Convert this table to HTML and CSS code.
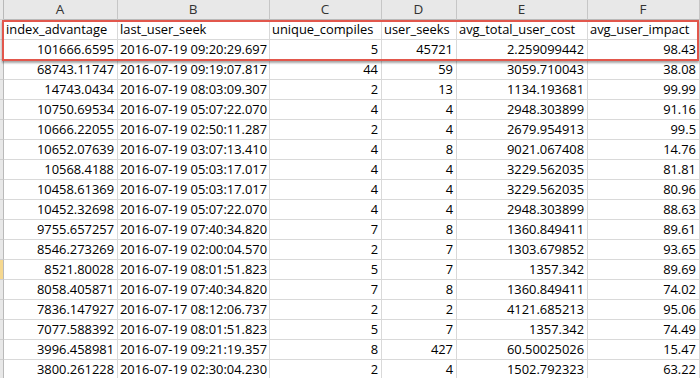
FILE: index.html
```html
<!DOCTYPE html>
<html>
<head>
<meta charset="utf-8">
<link rel="stylesheet" href="styles.css">
</head>
<body>
<div class="sheet">
  <table class="grid">
    <colgroup>
      <col class="c-stub"><col class="c-a"><col class="c-b"><col class="c-c"><col class="c-d"><col class="c-e"><col class="c-f">
    </colgroup>
    <thead>
      <tr class="letters">
        <th class="stub"></th><th>A</th><th>B</th><th>C</th><th>D</th><th>E</th><th>F</th>
      </tr>
    </thead>
    <tbody>
      <tr><td class="stub"></td><td>index_advantage</td><td>last_user_seek</td><td>unique_compiles</td><td>user_seeks</td><td>avg_total_user_cost</td><td>avg_user_impact</td></tr>
      <tr><td class="stub"></td><td class="n">101666.6595</td><td>2016-07-19 09:20:29.697</td><td class="n">5</td><td class="n">45721</td><td class="n">2.259099442</td><td class="n">98.43</td></tr>
      <tr><td class="stub"></td><td class="n">68743.11747</td><td>2016-07-19 09:19:07.817</td><td class="n">44</td><td class="n">59</td><td class="n">3059.710043</td><td class="n">38.08</td></tr>
      <tr><td class="stub"></td><td class="n">14743.0434</td><td>2016-07-19 08:03:09.307</td><td class="n">2</td><td class="n">13</td><td class="n">1134.193681</td><td class="n">99.99</td></tr>
      <tr><td class="stub"></td><td class="n">10750.69534</td><td>2016-07-19 05:07:22.070</td><td class="n">4</td><td class="n">4</td><td class="n">2948.303899</td><td class="n">91.16</td></tr>
      <tr><td class="stub"></td><td class="n">10666.22055</td><td>2016-07-19 02:50:11.287</td><td class="n">2</td><td class="n">4</td><td class="n">2679.954913</td><td class="n">99.5</td></tr>
      <tr><td class="stub"></td><td class="n">10652.07639</td><td>2016-07-19 03:07:13.410</td><td class="n">4</td><td class="n">8</td><td class="n">9021.067408</td><td class="n">14.76</td></tr>
      <tr><td class="stub"></td><td class="n">10568.4188</td><td>2016-07-19 05:03:17.017</td><td class="n">4</td><td class="n">4</td><td class="n">3229.562035</td><td class="n">81.81</td></tr>
      <tr><td class="stub"></td><td class="n">10458.61369</td><td>2016-07-19 05:03:17.017</td><td class="n">4</td><td class="n">4</td><td class="n">3229.562035</td><td class="n">80.96</td></tr>
      <tr><td class="stub"></td><td class="n">10452.32698</td><td>2016-07-19 05:07:22.070</td><td class="n">4</td><td class="n">4</td><td class="n">2948.303899</td><td class="n">88.63</td></tr>
      <tr><td class="stub"></td><td class="n">9755.657257</td><td>2016-07-19 07:40:34.820</td><td class="n">7</td><td class="n">8</td><td class="n">1360.849411</td><td class="n">89.61</td></tr>
      <tr><td class="stub"></td><td class="n">8546.273269</td><td>2016-07-19 02:00:04.570</td><td class="n">2</td><td class="n">7</td><td class="n">1303.679852</td><td class="n">93.65</td></tr>
      <tr><td class="stub sel"></td><td class="n">8521.80028</td><td>2016-07-19 08:01:51.823</td><td class="n">5</td><td class="n">7</td><td class="n">1357.342</td><td class="n">89.69</td></tr>
      <tr><td class="stub"></td><td class="n">8058.405871</td><td>2016-07-19 07:40:34.820</td><td class="n">7</td><td class="n">8</td><td class="n">1360.849411</td><td class="n">74.02</td></tr>
      <tr><td class="stub"></td><td class="n">7836.147927</td><td>2016-07-17 08:12:06.737</td><td class="n">2</td><td class="n">2</td><td class="n">4121.685213</td><td class="n">95.06</td></tr>
      <tr><td class="stub"></td><td class="n">7077.588392</td><td>2016-07-19 08:01:51.823</td><td class="n">5</td><td class="n">7</td><td class="n">1357.342</td><td class="n">74.49</td></tr>
      <tr><td class="stub"></td><td class="n">3996.458981</td><td>2016-07-19 09:21:19.357</td><td class="n">8</td><td class="n">427</td><td class="n">60.50025026</td><td class="n">15.47</td></tr>
      <tr><td class="stub"></td><td class="n">3800.261228</td><td>2016-07-19 02:30:04.230</td><td class="n">2</td><td class="n">4</td><td class="n">1502.792323</td><td class="n">63.22</td></tr>
    </tbody>
  </table>
  <div class="highlight"></div>
</div>
</body>
</html>
```

FILE: styles.css
```css
html, body {
  margin: 0;
  padding: 0;
  background: #ffffff;
}
body {
  width: 700px;
  height: 378px;
  overflow: hidden;
  font-family: "Open Sans", "Liberation Sans", sans-serif;
  font-size: 12.9px;
  color: #000;
}
.sheet {
  position: relative;
  width: 700px;
  height: 378px;
  overflow: hidden;
}
.grid {
  border-collapse: separate;
  border-spacing: 0;
  table-layout: fixed;
  width: 700px;
}
.c-stub { width: 4px; }
.c-a { width: 114px; }
.c-b { width: 152px; }
.c-c { width: 112px; }
.c-d { width: 75px; }
.c-e { width: 131px; }
.c-f { width: 112px; }

.grid th,
.grid td {
  box-sizing: border-box;
  height: 20px;
  padding: 0 3px 0 2px;
  border-right: 1px solid #d9d9d9;
  border-bottom: 1px solid #d9d9d9;
  white-space: nowrap;
  overflow: hidden;
  line-height: 19px;
  text-align: left;
  font-weight: normal;
}
.grid td.n {
  text-align: right;
}
.letters th {
  background: #e8e8e8;
  color: #333;
  text-align: center;
  border-right: 1px solid #c6c6c6;
  border-bottom: 1px solid #b9b9b9;
  font-size: 13.5px;
}
.grid .stub {
  padding: 0;
  background: #e8e8e8;
  border-right: 1px solid #b9b9b9;
  border-bottom: 1px solid #cfcfcf;
}
.grid .stub.sel {
  background: #f6d88f;
}
.highlight {
  position: absolute;
  left: 2px;
  top: 20px;
  width: 697px;
  height: 41px;
  box-sizing: border-box;
  border: 2px solid #e2574c;
  box-shadow: 0 2px 2px rgba(0, 0, 0, 0.35);
  pointer-events: none;
}
```
